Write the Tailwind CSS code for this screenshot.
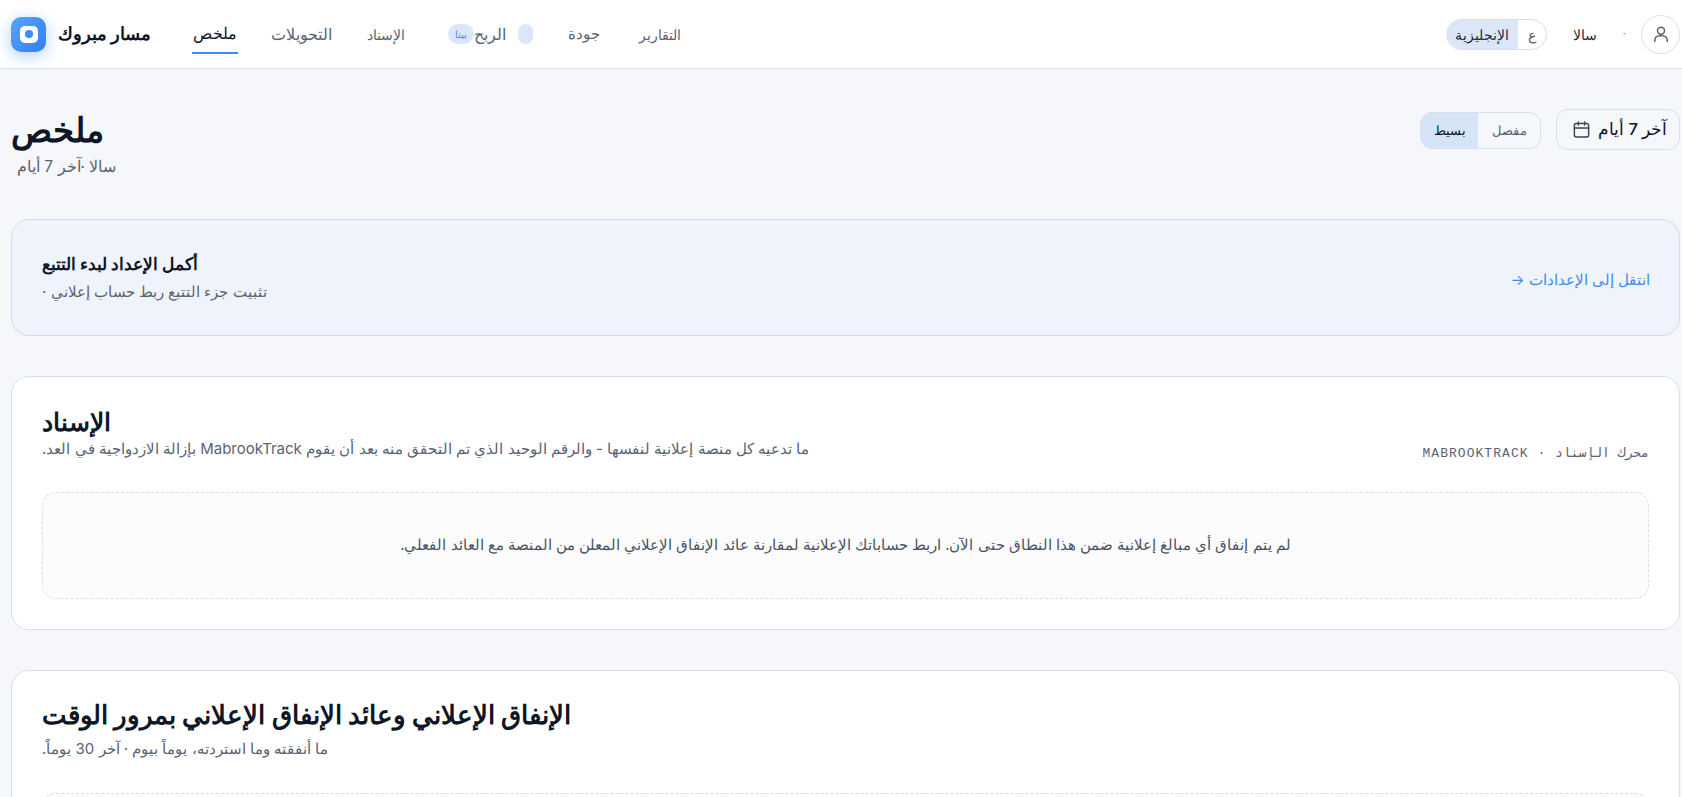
<!doctype html>
<html lang="ar">
<head>
<meta charset="utf-8">
<title>ملخص</title>
<script src="https://cdn.jsdelivr.net/npm/@tailwindcss/browser@4"></script>
</head>
<body class="h-[797px] overflow-hidden bg-[#f6f7fb] font-['Inter','Liberation_Sans',sans-serif] text-[#0f1626]">
<header class="flex h-[69px] items-center justify-between border-b border-[#d9dfea] bg-white pl-[11px] pr-[2px]">
  <div class="flex items-center">
    <div class="flex h-[35px] w-[35px] items-center justify-center rounded-[10px] bg-gradient-to-br from-[#5aa2f8] to-[#2f80f0] shadow-[0_4px_16px_rgba(59,140,245,0.4)]">
      <div class="flex h-[17px] w-[18px] items-center justify-center rounded-[5px] bg-white">
        <div class="h-[8px] w-[8px] rounded-full bg-[#3b8cf5]"></div>
      </div>
    </div>
    <span class="ml-[12px] w-[92px] whitespace-nowrap text-[17.5px] font-bold">مسار مبروك</span>
    <nav class="ml-[42px] flex h-[69px] items-center text-[#5b6373]">
      <a class="mt-[2px] flex h-[38px] items-center border-b-2 border-[#3b8cf5] px-[1px] pb-[5px] pt-[3px] text-[16px] font-medium text-[#0f1626]">ملخص</a>
      <a class="ml-[33px] text-[16px]">التحويلات</a>
      <a class="ml-[35px] text-[14px]">الإسناد</a>
      <span class="ml-[43px] flex h-[20px] w-[26px] items-center justify-center rounded-full bg-[#dbe7f8] text-[10px] text-[#3b8cf5]">بيتا</span>
      <a class="text-[16px]">الربح</a>
      <span class="ml-[12px] h-[20px] w-[15px] rounded-full bg-[#dbe7f8]"></span>
      <a class="ml-[35px] text-[15px]">جودة</a>
      <a class="ml-[39px] text-[14px]">التقارير</a>
    </nav>
  </div>
  <div class="flex items-center">
    <div class="flex h-[31px] w-[101px] items-center overflow-hidden rounded-full border border-[#d9dfea] text-[14px]">
      <span class="flex h-full w-[71px] items-center justify-center bg-[#dbe7f8] text-[#1f2937]">الإنجليزية</span>
      <span class="flex h-full flex-1 items-center justify-center text-[14px] text-[#5b6373]">ع</span>
    </div>
    <span class="ml-[26px] text-[14px] font-medium text-[#1f2937]">سالا</span>
    <span class="ml-[26px] text-[12px] text-[#8a93a3]">·</span>
    <button class="ml-[15px] flex h-[39px] w-[39px] items-center justify-center rounded-full border border-[#d9dfea] bg-white text-[#5b6373]">
      <svg class="h-[20px] w-[20px]" viewBox="0 0 24 24" fill="none" stroke="currentColor" stroke-width="1.8" stroke-linecap="round" stroke-linejoin="round"><circle cx="12" cy="8" r="4.2"/><path d="M4.5 21v-1.5a5.5 5.5 0 0 1 5.5-5.5h4a5.5 5.5 0 0 1 5.5 5.5V21"/></svg>
    </button>
  </div>
</header>
<main class="pl-[11px] pr-[2px]">
  <section class="flex items-start justify-between pt-[40px]">
    <div>
      <h1 class="h-[44px] text-[33.5px] font-bold leading-[42px]">ملخص</h1>
      <p class="mt-[3px] pl-[6px] text-[15.5px] leading-[22px] text-[#5b6373]">سالا ·آخر 7 أيام</p>
    </div>
    <div class="flex items-center">
      <div class="mt-[2px] flex h-[37px] w-[121px] overflow-hidden rounded-[12px] border border-[#d9dfea] text-[13px]">
        <span class="flex h-full w-[57px] items-center justify-center bg-[#d6e4f7] text-[#0f1626]">بسيط</span>
        <span class="flex h-full flex-1 items-center justify-center text-[#5b6373]">مفصل</span>
      </div>
      <button class="ml-[15px] flex h-[41px] w-[124px] items-center gap-[7px] rounded-[12px] border border-[#d9dfea] pl-[15px] text-[16.5px] font-medium">
        <svg class="h-[19px] w-[19px] text-[#3d4452]" viewBox="0 0 24 24" fill="none" stroke="currentColor" stroke-width="1.8" stroke-linecap="round" stroke-linejoin="round"><rect x="3" y="4.5" width="18" height="17" rx="2.5"/><path d="M8 2.5v4M16 2.5v4M3 10h18"/></svg>
        <span>آخر 7 أيام</span>
      </button>
    </div>
  </section>
  <section class="mt-[41px] flex h-[117px] items-center justify-between rounded-[18px] border border-[#cfdcf0] bg-[#eff3fb] pl-[30px] pr-[29px]">
    <div class="text-left">
      <h2 dir="rtl" class="text-left text-[17px] font-bold leading-[24px]">أكمل الإعداد لبدء التتبع</h2>
      <p dir="rtl" class="mt-[4px] text-left text-[15px] leading-[24px] text-[#5b6373]">تثبيت جزء التتبع ربط حساب إعلاني ·</p>
    </div>
    <a dir="rtl" class="mt-[6px] text-[14.7px] text-[#3b8cf5]">انتقل إلى الإعدادات →</a>
  </section>
  <section class="mt-[40px] h-[254px] rounded-[18px] border border-[#d9dfea] bg-white px-[30px] pt-[28px]">
    <div class="flex items-end justify-between">
      <div>
        <h2 dir="rtl" class="text-left text-[25px] font-bold leading-[34px]">الإسناد</h2>
        <p dir="rtl" class="text-left text-[15px] leading-[20px] text-[#5b6373]">ما تدعيه كل منصة إعلانية لنفسها - والرقم الوحيد الذي تم التحقق منه بعد أن يقوم MabrookTrack بإزالة الازدواجية في العد.</p>
      </div>
      <span class="mb-[-4px] font-['Liberation_Mono',monospace] text-[13px] tracking-[0.08em] text-[#5b6373]">MABROOKTRACK · محرك الإسناد</span>
    </div>
    <div dir="rtl" class="mt-[33px] flex h-[107px] items-center justify-center rounded-[14px] border border-dashed border-[#d9dfea] bg-[#fcfcfd] text-[14.7px] text-[#4b5363]">
      لم يتم إنفاق أي مبالغ إعلانية ضمن هذا النطاق حتى الآن. اربط حساباتك الإعلانية لمقارنة عائد الإنفاق الإعلاني المعلن من المنصة مع العائد الفعلي.
    </div>
  </section>
  <section class="mt-[40px] rounded-[18px] border border-[#d9dfea] bg-white px-[30px] pb-[30px] pt-[26px]">
    <h2 dir="rtl" class="text-left text-[26.2px] font-bold leading-[36px]">الإنفاق الإعلاني وعائد الإنفاق الإعلاني بمرور الوقت</h2>
    <p dir="rtl" class="mt-[6px] text-left text-[15px] leading-[20px] text-[#5b6373]">ما أنفقته وما استردته، يوماً بيوم · آخر 30 يوماً.</p>
    <div class="mt-[34px] h-[107px] rounded-[14px] border border-dashed border-[#d9dfea] bg-[#fcfcfd]"></div>
  </section>
</main>
</body>
</html>
